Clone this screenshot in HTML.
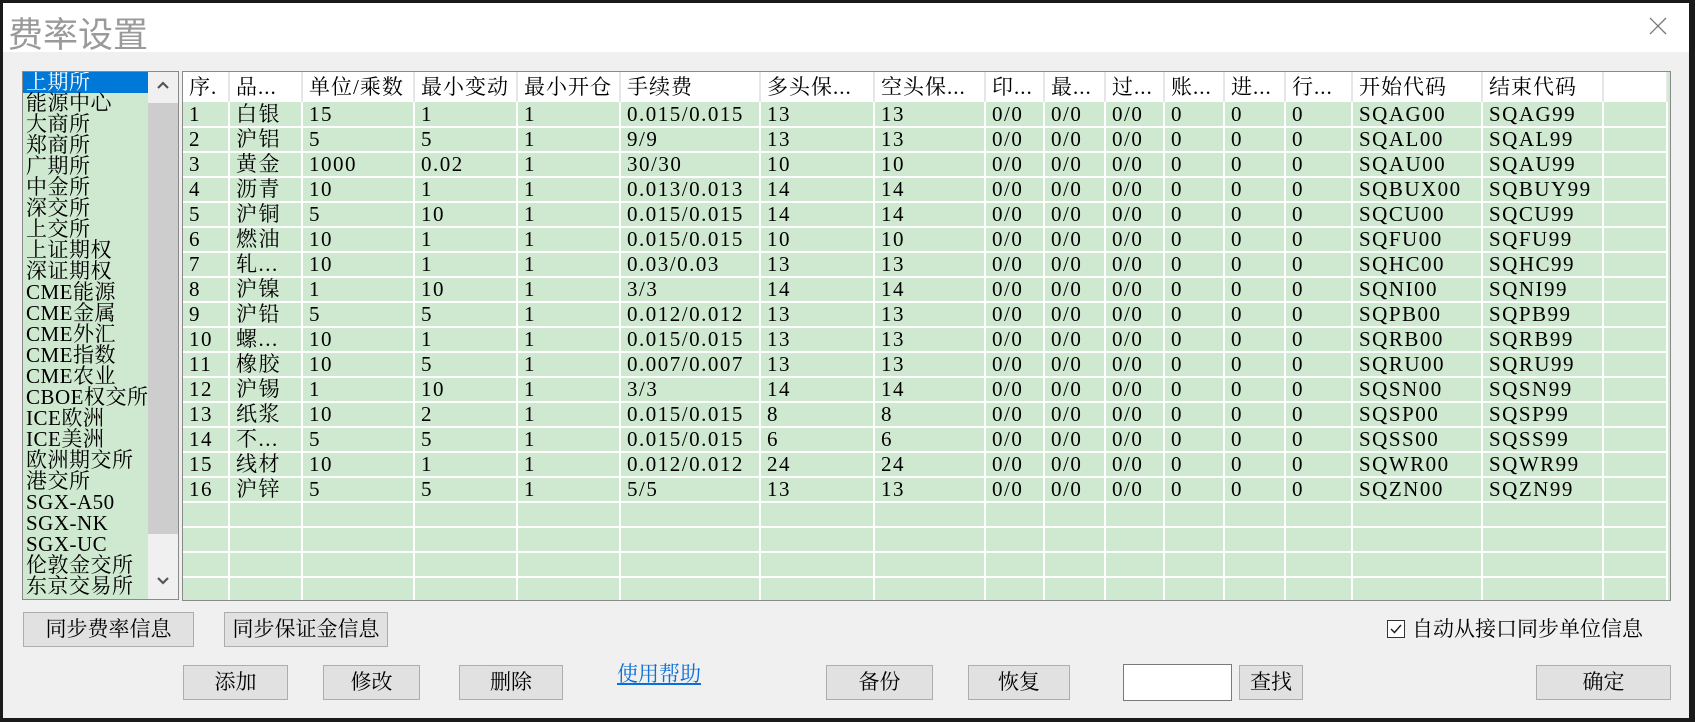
<!DOCTYPE html>
<html><head><meta charset="utf-8"><style>
*{margin:0;padding:0;box-sizing:border-box}
body{width:1695px;height:722px;background:#1a1a1a;position:relative;overflow:hidden;font-family:"Liberation Serif","Noto Serif CJK SC",serif;font-size:21px;color:#000}
#dlg{position:absolute;left:3px;top:3px;width:1686px;height:715px;background:#f0f0f0}
#tb{position:absolute;left:0;top:0;width:100%;height:49px;background:#fff}
#title{position:absolute;left:5px;top:4px;font-family:"Liberation Sans","Noto Sans CJK SC",sans-serif;font-size:35px;color:#9a9a9a}
#close{position:absolute;left:1646px;top:14px;width:18px;height:18px}
.a{position:absolute}
#list{left:19px;top:68px;width:157px;height:529px;border:1px solid #8a8a8a;background:#cfe8d0;overflow:hidden}
#list div.i{height:21px;line-height:21px;padding-left:3px;white-space:nowrap;width:125px;letter-spacing:0.5px}
#list div.sel{background:#0078d7;color:#fff}
#sb{position:absolute;left:125px;top:0;width:30px;height:527px;background:#f0f0f0}
#thumb{position:absolute;left:0;top:31px;width:30px;height:431px;background:#cdcdcd}
#grid{left:179px;top:68px;width:1489px;height:530px;border:1px solid #8a8a8a;background:#cfe8d0;overflow:hidden}
table{border-collapse:collapse;table-layout:fixed}
td{height:25px;border-right:2px solid #fff;border-bottom:2px solid #fff;padding-left:6px;white-space:nowrap;overflow:hidden;line-height:23px;letter-spacing:1.5px}
tr.h td{height:30px;background:#fff;border-right:2px solid #e6e6e6;border-bottom:none;letter-spacing:1px}
.btn{position:absolute;border:1px solid #adadad;background:#e1e1e1;text-align:center;font-size:21px}
</style></head><body>
<div id="dlg">
<div id="tb"><div id="title">费率设置</div>
<svg id="close" viewBox="0 0 18 18"><path d="M1 1L17 17M17 1L1 17" stroke="#777" stroke-width="1.3"/></svg></div>

<div id="list" class="a">
<div class="i sel">上期所</div><div class="i">能源中心</div><div class="i">大商所</div><div class="i">郑商所</div><div class="i">广期所</div><div class="i">中金所</div><div class="i">深交所</div><div class="i">上交所</div><div class="i">上证期权</div><div class="i">深证期权</div><div class="i">CME能源</div><div class="i">CME金属</div><div class="i">CME外汇</div><div class="i">CME指数</div><div class="i">CME农业</div><div class="i">CBOE权交所</div><div class="i">ICE欧洲</div><div class="i">ICE美洲</div><div class="i">欧洲期交所</div><div class="i">港交所</div><div class="i">SGX-A50</div><div class="i">SGX-NK</div><div class="i">SGX-UC</div><div class="i">伦敦金交所</div><div class="i">东京交易所</div>
<div id="sb"><div id="thumb"></div>
<svg class="a" style="left:9px;top:9px" width="12" height="8" viewBox="0 0 12 8"><path d="M1 7L6 2L11 7" stroke="#555" stroke-width="2.2" fill="none"/></svg>
<svg class="a" style="left:9px;top:505px" width="12" height="8" viewBox="0 0 12 8"><path d="M1 1L6 6L11 1" stroke="#555" stroke-width="2.2" fill="none"/></svg>
</div></div>

<div id="grid" class="a"><table>
<colgroup><col style="width:46px"><col style="width:73px"><col style="width:112px"><col style="width:103px"><col style="width:103px"><col style="width:140px"><col style="width:114px"><col style="width:111px"><col style="width:59px"><col style="width:61px"><col style="width:59px"><col style="width:60px"><col style="width:61px"><col style="width:67px"><col style="width:130px"><col style="width:121px"><col style="width:64px"></colgroup>
<tr class="h"><td>序.</td><td>品...</td><td>单位/乘数</td><td>最小变动</td><td>最小开仓</td><td>手续费</td><td>多头保...</td><td>空头保...</td><td>印...</td><td>最...</td><td>过...</td><td>账...</td><td>进...</td><td>行...</td><td>开始代码</td><td>结束代码</td><td></td></tr>
<tr><td>1</td><td>白银</td><td>15</td><td>1</td><td>1</td><td>0.015/0.015</td><td>13</td><td>13</td><td>0/0</td><td>0/0</td><td>0/0</td><td>0</td><td>0</td><td>0</td><td>SQAG00</td><td>SQAG99</td><td></td></tr>
<tr><td>2</td><td>沪铝</td><td>5</td><td>5</td><td>1</td><td>9/9</td><td>13</td><td>13</td><td>0/0</td><td>0/0</td><td>0/0</td><td>0</td><td>0</td><td>0</td><td>SQAL00</td><td>SQAL99</td><td></td></tr>
<tr><td>3</td><td>黄金</td><td>1000</td><td>0.02</td><td>1</td><td>30/30</td><td>10</td><td>10</td><td>0/0</td><td>0/0</td><td>0/0</td><td>0</td><td>0</td><td>0</td><td>SQAU00</td><td>SQAU99</td><td></td></tr>
<tr><td>4</td><td>沥青</td><td>10</td><td>1</td><td>1</td><td>0.013/0.013</td><td>14</td><td>14</td><td>0/0</td><td>0/0</td><td>0/0</td><td>0</td><td>0</td><td>0</td><td>SQBUX00</td><td>SQBUY99</td><td></td></tr>
<tr><td>5</td><td>沪铜</td><td>5</td><td>10</td><td>1</td><td>0.015/0.015</td><td>14</td><td>14</td><td>0/0</td><td>0/0</td><td>0/0</td><td>0</td><td>0</td><td>0</td><td>SQCU00</td><td>SQCU99</td><td></td></tr>
<tr><td>6</td><td>燃油</td><td>10</td><td>1</td><td>1</td><td>0.015/0.015</td><td>10</td><td>10</td><td>0/0</td><td>0/0</td><td>0/0</td><td>0</td><td>0</td><td>0</td><td>SQFU00</td><td>SQFU99</td><td></td></tr>
<tr><td>7</td><td>轧...</td><td>10</td><td>1</td><td>1</td><td>0.03/0.03</td><td>13</td><td>13</td><td>0/0</td><td>0/0</td><td>0/0</td><td>0</td><td>0</td><td>0</td><td>SQHC00</td><td>SQHC99</td><td></td></tr>
<tr><td>8</td><td>沪镍</td><td>1</td><td>10</td><td>1</td><td>3/3</td><td>14</td><td>14</td><td>0/0</td><td>0/0</td><td>0/0</td><td>0</td><td>0</td><td>0</td><td>SQNI00</td><td>SQNI99</td><td></td></tr>
<tr><td>9</td><td>沪铅</td><td>5</td><td>5</td><td>1</td><td>0.012/0.012</td><td>13</td><td>13</td><td>0/0</td><td>0/0</td><td>0/0</td><td>0</td><td>0</td><td>0</td><td>SQPB00</td><td>SQPB99</td><td></td></tr>
<tr><td>10</td><td>螺...</td><td>10</td><td>1</td><td>1</td><td>0.015/0.015</td><td>13</td><td>13</td><td>0/0</td><td>0/0</td><td>0/0</td><td>0</td><td>0</td><td>0</td><td>SQRB00</td><td>SQRB99</td><td></td></tr>
<tr><td>11</td><td>橡胶</td><td>10</td><td>5</td><td>1</td><td>0.007/0.007</td><td>13</td><td>13</td><td>0/0</td><td>0/0</td><td>0/0</td><td>0</td><td>0</td><td>0</td><td>SQRU00</td><td>SQRU99</td><td></td></tr>
<tr><td>12</td><td>沪锡</td><td>1</td><td>10</td><td>1</td><td>3/3</td><td>14</td><td>14</td><td>0/0</td><td>0/0</td><td>0/0</td><td>0</td><td>0</td><td>0</td><td>SQSN00</td><td>SQSN99</td><td></td></tr>
<tr><td>13</td><td>纸浆</td><td>10</td><td>2</td><td>1</td><td>0.015/0.015</td><td>8</td><td>8</td><td>0/0</td><td>0/0</td><td>0/0</td><td>0</td><td>0</td><td>0</td><td>SQSP00</td><td>SQSP99</td><td></td></tr>
<tr><td>14</td><td>不...</td><td>5</td><td>5</td><td>1</td><td>0.015/0.015</td><td>6</td><td>6</td><td>0/0</td><td>0/0</td><td>0/0</td><td>0</td><td>0</td><td>0</td><td>SQSS00</td><td>SQSS99</td><td></td></tr>
<tr><td>15</td><td>线材</td><td>10</td><td>1</td><td>1</td><td>0.012/0.012</td><td>24</td><td>24</td><td>0/0</td><td>0/0</td><td>0/0</td><td>0</td><td>0</td><td>0</td><td>SQWR00</td><td>SQWR99</td><td></td></tr>
<tr><td>16</td><td>沪锌</td><td>5</td><td>5</td><td>1</td><td>5/5</td><td>13</td><td>13</td><td>0/0</td><td>0/0</td><td>0/0</td><td>0</td><td>0</td><td>0</td><td>SQZN00</td><td>SQZN99</td><td></td></tr>
<tr><td></td><td></td><td></td><td></td><td></td><td></td><td></td><td></td><td></td><td></td><td></td><td></td><td></td><td></td><td></td><td></td><td></td></tr>
<tr><td></td><td></td><td></td><td></td><td></td><td></td><td></td><td></td><td></td><td></td><td></td><td></td><td></td><td></td><td></td><td></td><td></td></tr>
<tr><td></td><td></td><td></td><td></td><td></td><td></td><td></td><td></td><td></td><td></td><td></td><td></td><td></td><td></td><td></td><td></td><td></td></tr>
<tr><td></td><td></td><td></td><td></td><td></td><td></td><td></td><td></td><td></td><td></td><td></td><td></td><td></td><td></td><td></td><td></td><td></td></tr>
</table></div>

<div class="btn" style="left:20px;top:609px;width:171px;height:35px;line-height:33px">同步费率信息</div>
<div class="btn" style="left:221px;top:609px;width:164px;height:35px;line-height:33px">同步保证金信息</div>
<div class="a" style="left:1384px;top:617px;width:18px;height:18px;border:1px solid #333;background:#fff"><svg width="16" height="16" viewBox="0 0 16 16" style="position:absolute;left:0;top:0"><path d="M3 8L6.5 11.5L13 4" stroke="#222" stroke-width="1.5" fill="none"/></svg></div>
<div class="a" style="left:1409px;top:613px;line-height:26px;font-size:21px">自动从接口同步单位信息</div>

<div class="btn" style="left:180px;top:662px;width:105px;height:35px;line-height:33px">添加</div>
<div class="btn" style="left:320px;top:662px;width:97px;height:35px;line-height:33px">修改</div>
<div class="btn" style="left:456px;top:662px;width:104px;height:35px;line-height:33px">删除</div>
<div class="a" style="left:614px;top:658px;color:#0a6fd8;text-decoration:underline;line-height:26px;font-size:21px">使用帮助</div>
<div class="btn" style="left:823px;top:662px;width:107px;height:35px;line-height:33px">备份</div>
<div class="btn" style="left:965px;top:662px;width:102px;height:35px;line-height:33px">恢复</div>
<div class="a" style="left:1120px;top:661px;width:109px;height:37px;border:1px solid #7a7a7a;background:#fff"></div>
<div class="btn" style="left:1236px;top:662px;width:64px;height:35px;line-height:33px">查找</div>
<div class="btn" style="left:1533px;top:662px;width:135px;height:35px;line-height:33px">确定</div>
</div>
</body></html>
